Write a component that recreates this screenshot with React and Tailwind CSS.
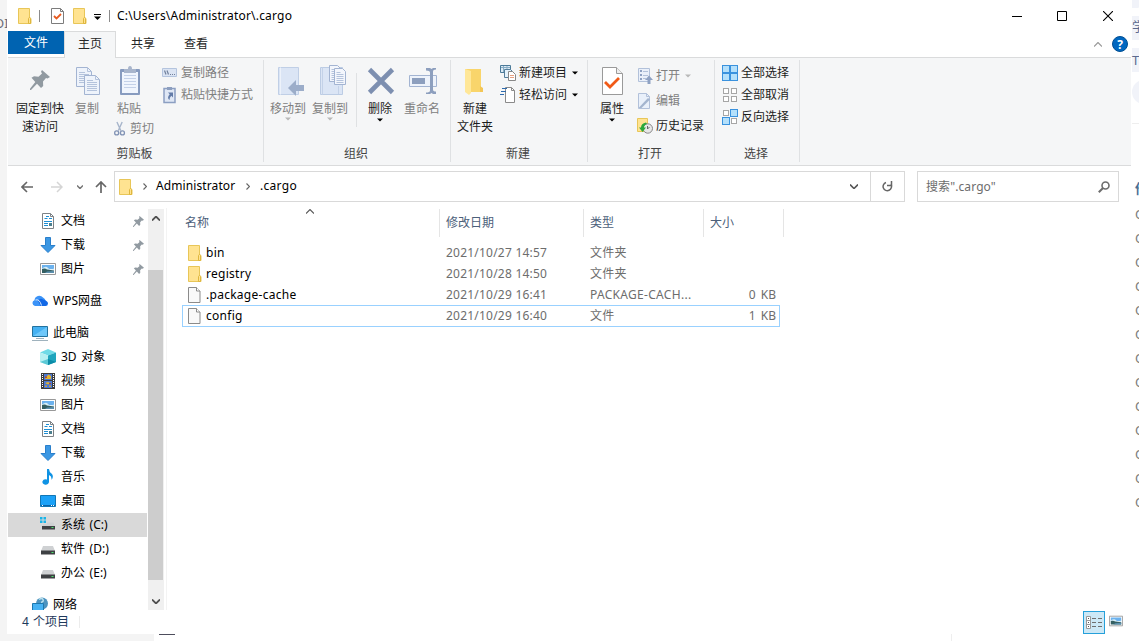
/* ---------- small shared icons ---------- */

const FolderIcon = ({ className = "w-[14px] h-4" }) => (
  <svg className={className} viewBox="0 0 14 16">
    <path d="M.5.5h11v9l1.500 1v5H.5z" fill="#ffe391" stroke="#e8c658" />
    <path d="M10.500 15.500v-5l1-1.200 1 1.200v5z" fill="#ffe391" stroke="#dfb73e" />
  </svg>
)

const FileIcon = () => (
  <svg className="w-[13px] h-4" viewBox="0 0 13 16">
    <path d="M.5.500h8l3.500 3.500v11.500H.5z" fill="#f9f9f9" stroke="#8b8b8b" />
    <path d="M8.500.500v3.500h3.500" fill="#fff" stroke="#8b8b8b" />
  </svg>
)

const PinShape = ({ className }) => (
  <svg className={className} viewBox="0 0 20 20">
    <path d="M12 0l8 7-2.500 1.500-1.500-.5-3 3.500.2 4.500-2.200 2-4-4.200L1 20H0v-1.200L5.300 12 1.500 7.800 4 6.200l4.500.5L12 3.500l-1-1.800z" fill="#919aa1" />
  </svg>
)

const DocIcon = () => (
  <svg className="w-4 h-4" viewBox="0 0 16 16">
    <path d="M2.500.5h8l3 3v12h-11z" fill="#fff" stroke="#7d8286" />
    <path d="M10.500.5v3h3" fill="none" stroke="#7d8286" />
    <path d="M6 3.500h3M4.500 5.500h3M9 5.500h3M4 8.500h8M4 10.500h4M4 12.500h4" stroke="#1e8fd4" />
    <path d="M9 10h3v3H9z" fill="#4c7f8e" />
  </svg>
)

const DownIcon = () => (
  <svg className="w-4 h-4" viewBox="0 0 16 16">
    <path d="M5.500.5h5v8h4.500L8 15.500 1 8.500h4.500z" fill="#3b97e3" stroke="#2a7fcb" />
  </svg>
)

const PictureIcon = ({ className = "w-4 h-4" }) => (
  <svg className={className} viewBox="0 0 16 16">
    <path d="M.5 2.500h15v11H.5z" fill="#fff" stroke="#989898" />
    <path d="M2 4h12v4H2z" fill="#6cb2ee" />
    <path d="M2 7.500q4-3 6-.5t6 .5v2H2z" fill="#d5edf7" />
    <path d="M2 8q3-1 5 .5l7 1V12H2z" fill="#345f62" />
    <path d="M7 10.500l7-.5v2H5z" fill="#5b8fae" />
  </svg>
)

const CloudIcon = () => (
  <svg className="w-4 h-4" viewBox="0 0 16 16">
    <path d="M3 13a3 3 0 0 1-.5-5.800A4.800 4.800 0 0 1 11 4.500 6 6 0 0 1 13 13z" fill="#3b93f7" />
    <path d="M8.500 13L6 7.500a3.500 3.500 0 0 1 5-1q5 1.500 5 4a2.700 2.700 0 0 1-3 2.500z" fill="#1268e6" />
    <path d="M3.500 7q4-1.500 6 5.500" fill="none" stroke="#d6e9ff" strokeWidth="1" />
  </svg>
)

const MonitorIcon = () => (
  <svg className="w-4 h-4" viewBox="0 0 16 16">
    <path d="M.5 1.500h15v10H.5z" fill="#45b1f2" stroke="#23729e" />
    <path d="M1 11l14-9v9z" fill="#6fc8fa" />
    <path d="M4 13.500h8M0 15.500h16" stroke="#9fb2bd" />
  </svg>
)

const CubeIcon = () => (
  <svg className="w-4 h-4" viewBox="0 0 16 16">
    <path d="M0 3.500L8 0l8 3.500-8 3z" fill="#6fdbe7" />
    <path d="M0 3.500l8 3V16l-8-3z" fill="#b5f0f2" />
    <path d="M16 3.500l-8 3V16l8-3z" fill="#1fa5bd" />
    <path d="M8 10l8 3-8 3z" fill="#0c8ca8" />
    <path d="M8 10l-8 3 8 3z" fill="#5cc9d6" />
  </svg>
)

const FilmIcon = () => (
  <svg className="w-4 h-4" viewBox="0 0 16 16">
    <path d="M1 0h14v16H1z" fill="#3d3d3d" />
    <path d="M2.500 1v14M13.500 1v14" stroke="#fff" strokeWidth="1" strokeDasharray="1 1" />
    <path d="M4 1h8v6H4zM4 8h8v7H4z" fill="#4a78d4" />
    <path d="M7 3l1.500-1.500L11 3v3H5zM5 10l3-1 3 1.500-3 1z" fill="#e5b52c" />
    <path d="M5 3.500h2V5H5zM9 10h2v1H9z" fill="#b84a28" />
    <path d="M5 12.500h2V14H5zM9 12.500h2V14H9z" fill="#c9a23a" />
  </svg>
)

const MusicIcon = () => (
  <svg className="w-4 h-4" viewBox="0 0 16 16">
    <path d="M7 0h2q0 3 3 5 2 2.500-.5 6 .5-4-2.500-5v7a3.300 2.700 0 1 1-2-2.500z" fill="#1093e4" />
  </svg>
)

const DesktopIcon = () => (
  <svg className="w-4 h-4" viewBox="0 0 16 16">
    <path d="M.5 2.500h15v11H.5z" fill="#1ba1f7" stroke="#1176b5" />
    <path d="M1 12.500h14" stroke="#0a62a8" />
    <path d="M11 12.500h1M13 12.500h1M2 12.500h1" stroke="#fff" />
  </svg>
)

const DriveIcon = ({ system }) => (
  <svg className="w-4 h-4" viewBox="0 0 16 16">
    {system && <path d="M0 0h2.500v2.500H0zM3.500 0H6v2.500H3.500zM0 3.500h2.500V6H0zM3.500 3.500H6V6H3.500z" fill="#19b4e8" />}
    <path d={system ? "M7 5.500h6.500l1.500 4H2l1.500-2.500H7z" : "M3 5h10l2 5H1z"} fill="#cfd1d3" />
    <path d={system ? "M2 9h13v3.500H2z" : "M1 9.500h14v4H1z"} fill="#3e4043" />
    <path d={system ? "M11.500 10.500h2" : "M11.500 11.500h2"} stroke="#4be36c" />
  </svg>
)

const NetworkIcon = () => (
  <svg className="w-4 h-4" viewBox="0 0 16 16">
    <circle cx="10" cy="6.500" r="6" fill="#4c93bf" />
    <path d="M7 2.500q3-2 4 0t-2 3" fill="none" stroke="#b9dfed" strokeWidth="1.500" />
    <path d="M.5 6.500h11v7H.5z" fill="#47b2f3" stroke="#1e78ae" />
    <path d="M0 15.500h12" stroke="#86a8bc" />
  </svg>
)

const Caret = ({ className }) => (
  <svg className={className} viewBox="0 0 6 4">
    <path d="M0 0.500h6L3 3.500z" fill="currentColor" />
  </svg>
)

/* ---------- ribbon icons ---------- */

const CopyBig = () => (
  <svg className="w-8 h-8" viewBox="0 0 32 32">
    {[[5.500, 1.500], [13.500, 9.500]].map(([x, y]) => (
      <g key={x} transform={`translate(${x} ${y})`}>
        <path d="M0 0h11l4 4v15H0z" fill="#eef3fb" stroke="#a3b4d2" />
        <path d="M11 0v4h4M2.500 5h6M2.500 7h10M2.500 9h10M2.500 11h10M2.500 13h10M2.500 15h10" fill="none" stroke="#b4c3dc" />
      </g>
    ))}
  </svg>
)

const PasteBig = () => (
  <svg className="w-8 h-8" viewBox="-1 0 32 32">
    <rect x="6" y="3" width="20" height="26" rx="1" fill="#879bbf" />
    <path d="M8 6h16v21H8z" fill="#f0f5fd" />
    <path d="M10 9.500h12M10 12.500h12M10 15.500h12M10 18.500h12M10 21.500h12" stroke="#c4d1e8" />
    <path d="M10 3h4q0-3 2-3t2 3h4v4H10z" fill="#a8b5cc" />
  </svg>
)

const MoveBig = () => (
  <svg className="w-8 h-8" viewBox="0 0 32 32">
    <path d="M6.500 1.500h20v27h-20z" fill="#dbe5f5" stroke="#c0cfe6" />
    <path d="M8.500 1.500v27" stroke="#edf2fa" />
    <path d="M16 22l8-8v5h8v6h-8v5z" fill="#9cadc9" />
  </svg>
)

const CopyToBig = () => (
  <svg className="w-8 h-8 overflow-visible" viewBox="0 0 32 32">
    <path d="M6.500 1.500h22v27h-22z" fill="#dbe5f5" stroke="#bccce4" />
    <path d="M8.500 1.500v27M24.500 20v8" stroke="#c4d2e8" />
    {[[15.500, -.5], [20.500, 2.500]].map(([x, y]) => (
      <g key={x} transform={`translate(${x} ${y})`}>
        <path d="M0 0h8l3 3v13H0z" fill="#f3f6fc" stroke="#a3b4d2" />
        <path d="M2 4h4M2 6h7M2 8h7M2 10h7M2 12h7M2 14h7" stroke="#b4c3dc" />
      </g>
    ))}
  </svg>
)

const DeleteBig = () => (
  <svg className="w-8 h-8" viewBox="0 0 32 32">
    <path d="M5.500 3.500l23 23M28.500 3.500l-23 23" stroke="#7d8fb0" strokeWidth="4.600" />
  </svg>
)

const RenameBig = () => (
  <svg className="w-8 h-8" viewBox="0 0 32 32">
    <path d="M3.500 9.500h27v11h-27z" fill="#eef3fb" stroke="#a3b4d2" />
    <path d="M6 12h13v6H6z" fill="#8d9fbe" />
    <path d="M20 2h4l1.500 1 1.500-1h3v1.500q-3 0-3 2v18q0 2 3 2V28h-3l-1.500-1-1.500 1h-4v-1.500q4 0 4-2v-18q0-2-4-2z" fill="#8d9fbe" />
  </svg>
)

const NewFolderBig = () => (
  <svg className="w-8 h-8" viewBox="0 0 32 32">
    <path d="M6 3h16v20l2 1v2H6z" fill="#f9d56b" />
    <path d="M6 3l6 2v22l-2 2-4-3z" fill="#ffe798" />
    <path d="M21 20l3 2v4h-3z" fill="#f3c656" />
  </svg>
)

const PropsBig = () => (
  <svg className="w-8 h-8" viewBox="0 0 32 32">
    <path d="M6.500 1.500h14l6 6v21h-20z" fill="#fff" stroke="#9a9a9a" />
    <path d="M20.500 1.500v6h6" fill="#eee" stroke="#9a9a9a" />
    <path d="M9 16l5 5 9-9" fill="none" stroke="#f15a17" strokeWidth="2.800" />
  </svg>
)

const PathIcon = () => (
  <svg className="w-4 h-4" viewBox="0 0 16 16">
    <path d="M.5 3.500h14v8H.5z" fill="#dbe4f3" stroke="#b4c4de" />
    <path d="M2.500 5.500l1.500 4M5 5.500l1.500 4M8 9.500h1M10 9.500h1M12 9.500h1" fill="none" stroke="#71809c" strokeWidth="1.200" />
  </svg>
)

const ShortcutIcon = () => (
  <svg className="w-4 h-4 overflow-visible" viewBox="0 0 16 16">
    <path d="M2 1.500h11v14H2z" fill="#dfe7f5" stroke="#8c9fc2" strokeWidth="1.500" />
    <path d="M5 0h5v3H5z" fill="#8c9ebf" />
    <path d="M6 5.500h5v5L9.300 8.800q-2 1.700-1.800 4.200Q4.500 11 7.700 7.200z" fill="#627ba8" />
  </svg>
)

const CutIcon = () => (
  <svg className="w-4 h-4" viewBox="0 0 16 16">
    <path d="M4.500 0l4.500 10M10.500 0L6 10" fill="none" stroke="#a7b5cb" strokeWidth="1.600" />
    <circle cx="4.200" cy="12.500" r="2.300" fill="none" stroke="#8193b5" strokeWidth="1.500" />
    <circle cx="10.800" cy="12.500" r="2.300" fill="none" stroke="#8193b5" strokeWidth="1.500" />
  </svg>
)

const NewItemIcon = () => (
  <svg className="w-4 h-4" viewBox="0 0 16 16">
    <path d="M.5.5h10v7H.5z" fill="#dceaf5" stroke="#4b7a99" />
    <path d="M1 2.500h9M3.500 1v6M7 1v6" stroke="#88adc5" />
    <path d="M4.500 4.500h6l2 2v6h-8z" fill="#e4f2fc" stroke="#557e9b" />
    <path d="M8.500 6.500h4l3 3v6h-7z" fill="#fff" stroke="#888" />
    <path d="M10 10.500h4M10 12.500h4" stroke="#e8a183" />
  </svg>
)

const EasyIcon = () => (
  <svg className="w-4 h-4" viewBox="0 0 16 16">
    <path d="M5.500.5h6l3 3v12h-9z" fill="#fff" stroke="#8a8a8a" />
    <path d="M11.500.5v3h3" fill="none" stroke="#8a8a8a" />
    <path d="M2 1.500h5M1 4.500h5M0 7.500h4" stroke="#2e6bad" strokeWidth="1.200" />
  </svg>
)

const OpenIcon = () => (
  <svg className="w-4 h-4" viewBox="0 0 16 16">
    <path d="M1.500.5h11v13h-11z" fill="#eaf0fa" stroke="#b2c1da" />
    <path d="M3 2h2v2H3zM3 6h2v2H3zM3 10h2v2H3z" fill="#8fa2c3" />
    <path d="M6 3.500h5M6 7.500h5M6 10.500h3" stroke="#b2c1da" />
    <path d="M8 12l4-4.500 4 4.500h-2.500v4h-3v-4z" fill="#8fa2c3" />
  </svg>
)

const EditIcon = () => (
  <svg className="w-4 h-4" viewBox="0 0 16 16">
    <path d="M1.500.500h8l3 3v12h-11z" fill="#e9f0fa" stroke="#b2c1da" />
    <path d="M9.500.500v3h3" fill="none" stroke="#b2c1da" />
    <path d="M2 14.500L11 5l2 1.500-8.500 8.500H2z" fill="#a4b5cf" />
  </svg>
)

const HistoryIcon = () => (
  <svg className="w-4 h-4" viewBox="0 0 16 16">
    <path d="M.5.500h10v13H.5z" fill="#ffe391" stroke="#e8c658" />
    <circle cx="10.800" cy="10.500" r="4.700" fill="#e7e7e7" stroke="#888" />
    <path d="M10.500 8v3l2-2" fill="none" stroke="#666" />
    <path d="M9 4.500q-5 1-5 5H2L5.500 14 9 9.500H7q0-2.500 3-3.500z" fill="#2ca93b" />
  </svg>
)

// state of each tile, in reading order
const TilesIcon = ({ on }) => (
  <svg className="w-4 h-4" viewBox="0 0 16 16">
    {[[0.500, 0.500], [8.500, 0.500], [0.500, 8.500], [8.500, 8.500]].map(([x, y], i) =>
      on[i] ? (
        <rect key={i} x={x} y={y} width="7" height="7" fill="#b4e0fb" stroke="#3a92de" />
      ) : (
        <rect key={i} x={x + 1} y={y + 1} width="5" height="5" fill="#fff" stroke="#a6a6a6" />
      )
    )}
  </svg>
)

/* ---------- ribbon building blocks ---------- */

function Group({ label, width, children }) {
  return (
    <div className={`${width} h-[107px] flex flex-col relative shrink-0`}>
      <div className="flex h-[86px]">{children}</div>
      <div className="text-center leading-[18px] text-[#444] pt-px pr-[3px]">{label}</div>
      <div className="absolute right-0 top-[2px] h-[102px] w-px bg-[#dfe1e3]" />
    </div>
  )
}

function BigButton({ icon, lines, width, muted, arrow }) {
  return (
    <div className={`${width} flex flex-col items-center shrink-0 ${muted ? "text-[#808080]" : "text-[#1c1c1c]"}`}>
      <div className="h-[42px] pt-2">{icon}</div>
      {lines.map((line) => (
        <div key={line} className="leading-[18px] whitespace-nowrap">{line}</div>
      ))}
      {arrow && <Caret className={muted ? "w-[6px] h-1 text-[#b8b8b8] -mt-px" : "w-[6px] h-1 text-black"} />}
    </div>
  )
}

function SmallButton({ icon, text, muted, arrow, height = "h-[22px]" }) {
  return (
    <div className={`${height} flex items-center whitespace-nowrap ${muted ? "text-[#808080]" : "text-[#1c1c1c]"}`}>
      {icon}
      <span className="ml-[3px] leading-[18px]">{text}</span>
      {arrow && <Caret className={`w-[6px] h-1 ml-[5px] ${muted ? "text-[#b8b8b8]" : "text-black"}`} />}
    </div>
  )
}

function Ribbon() {
  return (
    <div className="ml-px h-[108px] bg-[#f5f6f7] border-b border-[#dadbdc] flex">
      <Group label="剪贴板" width="w-[256px]">
        <BigButton width="w-16" lines={["固定到快", "速访问"]} icon={<PinShape className="w-5 h-5 mt-1" />} />
        <BigButton width="w-[30px]" lines={["复制"]} icon={<CopyBig />} muted />
        <div className="w-[52px]">
          <BigButton width="w-[54px]" lines={["粘贴"]} icon={<PasteBig />} muted />
          <div className="pl-[11px]">
            <SmallButton icon={<CutIcon />} text="剪切" muted />
          </div>
        </div>
        <div className="pt-1 pl-2">
          <SmallButton icon={<PathIcon />} text="复制路径" muted />
          <SmallButton icon={<ShortcutIcon />} text="粘贴快捷方式" muted />
        </div>
      </Group>

      <Group label="组织" width="w-[187px]">
        <BigButton width="w-12" lines={["移动到"]} icon={<MoveBig />} muted arrow />
        <BigButton width="w-9" lines={["复制到"]} icon={<CopyToBig />} muted arrow />
        <div className="w-px h-[54px] mt-[15px] ml-2 bg-[#dfe1e3]" />
        <BigButton width="w-[46px]" lines={["删除"]} icon={<DeleteBig />} arrow />
        <BigButton width="w-[38px]" lines={["重命名"]} icon={<RenameBig />} muted />
      </Group>

      <Group label="新建" width="w-[137px]">
        <BigButton width="w-12" lines={["新建", "文件夹"]} icon={<NewFolderBig />} />
        <div className="pt-1 pl-px">
          <SmallButton icon={<NewItemIcon />} text="新建项目" arrow />
          <SmallButton icon={<EasyIcon />} text="轻松访问" arrow />
        </div>
      </Group>

      <Group label="打开" width="w-[127px]">
        <BigButton width="w-12" lines={["属性"]} icon={<PropsBig />} arrow />
        <div className="pt-[5px] pl-[1px]">
          <SmallButton height="h-[25px]" icon={<OpenIcon />} text="打开" muted arrow />
          <SmallButton height="h-[25px]" icon={<EditIcon />} text="编辑" muted />
          <SmallButton height="h-[25px]" icon={<HistoryIcon />} text="历史记录" />
        </div>
      </Group>

      <Group label="选择" width="w-[85px]">
        <div className="pt-1 pl-[7px]">
          <SmallButton icon={<TilesIcon on={[1, 1, 1, 1]} />} text="全部选择" />
          <SmallButton icon={<TilesIcon on={[0, 0, 0, 0]} />} text="全部取消" />
          <SmallButton icon={<TilesIcon on={[0, 1, 1, 0]} />} text="反向选择" />
        </div>
      </Group>
    </div>
  )
}

/* ---------- title, tabs, address ---------- */

function TitleBar() {
  return (
    <div className="h-[31px] flex items-center pl-[11px] shrink-0">
      <FolderIcon className="w-[14px] h-4" />
      <div className="w-px h-3 bg-[#8b8b8b] ml-[7px]" />
      <svg className="w-[13px] h-4 ml-[11px]" viewBox="0 0 13 16">
        <path d="M.5.5h9l3 3v12H.5z" fill="#fff" stroke="#7c7c7c" />
        <path d="M9.500.5v3h3" fill="none" stroke="#7c7c7c" />
        <path d="M3 8l2.500 2.500L10 6" fill="none" stroke="#e85b20" strokeWidth="1.800" />
      </svg>
      <FolderIcon className="w-[14px] h-4 ml-[9px]" />
      <svg className="w-[7px] h-[6px] ml-[7px] mt-[2px]" viewBox="0 0 7 6">
        <path d="M0 .5h7" stroke="#000" />
        <path d="M0 2.500h7L3.500 6z" />
      </svg>
      <div className="w-px h-3 bg-[#8b8b8b] ml-2" />
      <span className="ml-[7px] text-black leading-[18px] tracking-[0.2px]">C:\Users\Administrator\.cargo</span>
      <div className="flex-1" />
      <svg className="w-[10px] h-[10px]" viewBox="0 0 10 10">
        <path d="M0 5.500h10" stroke="#000" />
      </svg>
      <svg className="w-[10px] h-[10px] ml-[35px]" viewBox="0 0 10 10">
        <path d="M.5.5h9v9h-9z" fill="none" stroke="#000" />
      </svg>
      <svg className="w-[10px] h-[10px] ml-9 mr-[18px]" viewBox="0 0 10 10">
        <path d="M0 0l10 10M10 0L0 10" stroke="#000" strokeWidth="1.100" />
      </svg>
    </div>
  )
}

function Tabs() {
  return (
    <div className="h-[27px] flex ml-px text-[#262626] leading-[25px] text-center shrink-0">
      <div className="w-14 h-[27px] border-b border-[#dadbdc]">
        <div className="h-[23px] bg-[#0063b1] text-white leading-[24px]">文件</div>
      </div>
      <div className="w-[52px] h-[27px] bg-[#f5f6f7] border border-b-0 border-[#dadbdc] leading-[23px]">主页</div>
      <div className="flex flex-1 border-b border-[#dadbdc]">
        <div className="w-[54px]">共享</div>
        <div className="w-[52px]">查看</div>
        <div className="flex-1" />
        <svg className="w-2 h-[5px] mt-[11px]" viewBox="0 0 8 5">
          <path d="M0 4.500l4-4 4 4" fill="none" stroke="#999" strokeWidth="1.200" />
        </svg>
        <div className="w-4 h-4 rounded-full bg-[#0067c0] border border-[#004e92] text-white font-bold leading-[15px] ml-[10px] mr-[3px] mt-[5px]">?</div>
      </div>
    </div>
  )
}

const Crumb = () => (
  <svg className="w-1 h-[7px]" viewBox="0 0 4 7">
    <path d="M.5.500l3 3-3 3" fill="none" stroke="#666" strokeWidth="1.200" />
  </svg>
)

function AddressBar() {
  return (
    <div className="h-[42px] flex items-start pt-[5px] shrink-0">
      <div className="flex items-center h-[31px] w-[107px] pl-[14px]">
        <svg className="w-3 h-3" viewBox="0 0 12 12">
          <path d="M12 6H1M6 1L1 6l5 5" fill="none" stroke="#666" strokeWidth="1.600" />
        </svg>
        <svg className="w-3 h-3 ml-[18px]" viewBox="0 0 12 12">
          <path d="M0 6h11M6 1l5 5-5 5" fill="none" stroke="#d5d5d5" strokeWidth="1.500" />
        </svg>
        <svg className="w-[6px] h-1 ml-[14px]" viewBox="0 0 6 4">
          <path d="M0 .5l3 3 3-3" fill="none" stroke="#777" strokeWidth="1.500" />
        </svg>
        <svg className="w-3 h-3 ml-3" viewBox="0 0 12 12">
          <path d="M6 12V1M1 6l5-5 5 5" fill="none" stroke="#666" strokeWidth="1.700" />
        </svg>
      </div>
      <div className="w-[791px] h-[31px] border border-[#d9d9d9] flex items-center pl-1 text-black">
        <FolderIcon className="w-[14px] h-4" />
        <div className="w-[23px] flex justify-center"><Crumb /></div>
        <span className="w-[81px] leading-[18px] tracking-[0.1px] -mt-px">Administrator</span>
        <div className="w-[22px] flex justify-center"><Crumb /></div>
        <span className="leading-[18px] ml-px tracking-[0.3px] -mt-px">.cargo</span>
        <div className="flex-1" />
        <svg className="w-2 h-[5px] mr-3" viewBox="0 0 8 5">
          <path d="M0 .5l4 4 4-4" fill="none" stroke="#555" strokeWidth="1.600" />
        </svg>
        <div className="w-[34px] h-full border-l border-[#d9d9d9] flex items-center justify-center">
          <svg className="w-[11px] h-[11px]" viewBox="0 0 11 11">
            <path d="M4 1.500A4.200 4.200 0 1 0 9 3.500" fill="none" stroke="#666" strokeWidth="1.500" />
            <path d="M5 4.500h4.500V0" fill="none" stroke="#666" strokeWidth="1.500" />
          </svg>
        </div>
      </div>
      <div className="w-[202px] h-[31px] ml-3 border border-[#d9d9d9] flex items-center justify-between pl-2 pr-2 text-[#6d6d6d]">
        <span className="leading-[18px] tracking-[0.1px]">搜索".cargo"</span>
        <svg className="w-3 h-3" viewBox="0 0 12 12">
          <circle cx="7.500" cy="4.500" r="3.500" fill="none" stroke="#6d6d6d" strokeWidth="1.600" />
          <path d="M5 7L.8 11.200" stroke="#6d6d6d" strokeWidth="2" />
        </svg>
      </div>
    </div>
  )
}

/* ---------- navigation pane ---------- */

const quickAccess = [
  { text: "文档", icon: <DocIcon /> },
  { text: "下载", icon: <DownIcon /> },
  { text: "图片", icon: <PictureIcon /> },
]

const thisPc = [
  { text: "3D 对象", icon: <CubeIcon /> },
  { text: "视频", icon: <FilmIcon /> },
  { text: "图片", icon: <PictureIcon /> },
  { text: "文档", icon: <DocIcon /> },
  { text: "下载", icon: <DownIcon /> },
  { text: "音乐", icon: <MusicIcon /> },
  { text: "桌面", icon: <DesktopIcon /> },
  { text: "系统 (C:)", icon: <DriveIcon system />, selected: true },
  { text: "软件 (D:)", icon: <DriveIcon /> },
  { text: "办公 (E:)", icon: <DriveIcon /> },
]

function NavItem({ icon, text, root, pinned, selected }) {
  return (
    <div className={`h-6 flex items-center shrink-0 ${root ? "pl-6" : "pl-8"} ${selected ? "bg-[#d9d9d9]" : ""}`}>
      {icon}
      <span className="ml-[5px] leading-[18px] flex-1 [word-spacing:1.5px]">{text}</span>
      {pinned && <PinShape className="w-[11px] h-[11px] mr-[3px]" />}
    </div>
  )
}

function NavPane() {
  return (
    <div className="flex h-[402px] ml-px text-black">
      <div className="w-[139px] flex flex-col overflow-hidden pt-px">
        {quickAccess.map((item) => <NavItem key={item.text} {...item} pinned />)}
        <div className="h-2 shrink-0" />
        <NavItem icon={<CloudIcon />} text="WPS网盘" root />
        <div className="h-2 shrink-0" />
        <NavItem icon={<MonitorIcon />} text="此电脑" root />
        {thisPc.map((item) => <NavItem key={item.text} {...item} />)}
        <div className="h-2 shrink-0" />
        <NavItem icon={<NetworkIcon />} text="网络" root />
      </div>
      <div className="w-4 ml-px mt-px bg-[#f0f0f0] flex flex-col items-center">
        <svg className="w-2 h-[5px] mt-[7px]" viewBox="0 0 8 5">
          <path d="M0 4.500l4-4 4 4" fill="none" stroke="#505050" strokeWidth="1.800" />
        </svg>
        <div className="w-full h-[310px] mt-[49px] pr-px"><div className="h-full bg-[#cdcdcd]" /></div>
        <svg className="w-2 h-[5px] mt-[19px]" viewBox="0 0 8 5">
          <path d="M0 .5l4 4 4-4" fill="none" stroke="#505050" strokeWidth="1.800" />
        </svg>
      </div>
      <div className="w-px ml-[2px] bg-[#f3f3f3]" />
    </div>
  )
}

/* ---------- file list ---------- */

const files = [
  { name: "bin", date: "2021/10/27 14:57", type: "文件夹", size: "", folder: true },
  { name: "registry", date: "2021/10/28 14:50", type: "文件夹", size: "", folder: true },
  { name: ".package-cache", date: "2021/10/29 16:41", type: "PACKAGE-CACH...", size: "0 KB" },
  { name: "config", date: "2021/10/29 16:40", type: "文件", size: "1 KB", focused: true },
]

function FileList() {
  return (
    <div className="pl-[15px] pt-px">
      <div className="flex h-7 leading-[28px] text-[#4c607a] relative">
        <div className="w-[258px] pl-[3px] border-r border-[#e5e5e5]">名称</div>
        <div className="w-[144px] pl-[6px] border-r border-[#e5e5e5]">修改日期</div>
        <div className="w-[120px] pl-[6px] border-r border-[#e5e5e5]">类型</div>
        <div className="w-[80px] pl-[6px] border-r border-[#e5e5e5]">大小</div>
        {/* sort direction marker */}
        <svg className="absolute left-[124px] top-0 w-2 h-[5px]" viewBox="0 0 8 5">
          <path d="M0 4.500l4-4 4 4" fill="none" stroke="#555" strokeWidth="1.100" />
        </svg>
      </div>
      <div className="h-[5px]" />
      {files.map((file) => (
        <div
          key={file.name}
          className={`flex items-center w-[598px] border ${file.focused ? "h-[22px] border-[#99d1ff]" : "h-[21px] border-transparent"}`}
        >
          <div className="w-[263px] flex items-center pl-[5px]">
            <div className="w-[18px]">{file.folder ? <FolderIcon /> : <FileIcon />}</div>
            <span className="text-black leading-[18px] tracking-[0.27px]">{file.name}</span>
          </div>
          <span className="w-[144px] leading-[18px] text-[#6d6d6d] tracking-[0.22px]">{file.date}</span>
          <span className="w-[110px] leading-[18px] text-[#6d6d6d] tracking-[0.3px]">{file.type}</span>
          <span className="flex-1 leading-[18px] text-right pr-[3px] text-[#6d6d6d] [word-spacing:2px]">{file.size}</span>
        </div>
      ))}
    </div>
  )
}

function StatusBar() {
  return (
    <div className="h-6 flex items-center pl-[15px] text-[#1e395b] shrink-0">
      <span className="leading-[18px] w-[57px] [word-spacing:1px]">4 个项目</span>
      <div className="w-px h-3 bg-[#ececec]" />
      <div className="flex-1" />
      <div className="w-[22px] h-[23px] bg-[#cce8f6] border border-[#26a0da] flex items-center justify-center mr-1">
        <svg className="w-4 h-[14px]" viewBox="0 0 16 14">
          <path d="M.5 1.500h4v12h-4zM.5 5.500h4M.5 9.500h4" fill="#fff" stroke="#999" />
          <path d="M2 3.500h1M2 7.500h1M2 11.500h1" stroke="#555" />
          <path d="M6 3.500h4M12 3.500h4M6 7.500h4M12 7.500h4M6 11.500h4M12 11.500h4" stroke="#6f6f6f" />
        </svg>
      </div>
      <PictureIcon className="w-[14px] h-[14px] mr-2 mb-[3px]" />
    </div>
  )
}

/* ---------- page edge behind the window ---------- */

function RightEdge() {
  return (
    <div className="w-2 h-[641px] bg-white overflow-hidden shrink-0 pl-px text-[#5b6a8f]">
      <div className="h-2 w-3 bg-[#f1f3f9] rounded-br-full" />
      <div className="h-6 mt-2 bg-[#f1f3f9] leading-[20px] text-[13px] whitespace-nowrap">学</div>
      <div className="h-6 mt-2 bg-[#f1f3f9] leading-[24px] text-[13px]">T</div>
      <div className="h-6 w-6 mt-2 bg-[#f1f3f9] rounded-full" />
      <div className="h-px mt-[19px] bg-[#eee]" />
      <div className="h-[78px] pt-[54px] pl-[3px] font-bold text-[13px] leading-[20px] text-[#4a6f95]">他</div>
      {Array.from({ length: 13 }, (_, i) => (
        <div key={i} className="h-6 pl-[3px] text-[13px] leading-6 text-[#7a7a7a]">O</div>
      ))}
    </div>
  )
}

export default function App() {
  return (
    <div className="w-[1139px] h-[641px] flex overflow-hidden bg-white text-[12px] font-['Noto_Sans','Noto_Sans_CJK_SC',sans-serif]">
      <div className="w-[7px] h-[641px] bg-[#f4f4f4] overflow-hidden shrink-0">
        <div className="mt-[14px] -ml-[6px] text-[13px] leading-[18px] text-[#6b6b78] whitespace-nowrap">OI</div>
      </div>
      <div className="w-[1124px] h-[641px] flex flex-col shrink-0">
        <TitleBar />
        <Tabs />
        <Ribbon />
        <AddressBar />
        <div className="flex h-[402px]">
          <NavPane />
          <FileList />
        </div>
        <StatusBar />
        <div className="h-[7px] flex">
          <div className="w-[147px] bg-[#f4f4f4]" />
          <div className="w-4 h-px ml-[5px] bg-[#4d4d5c]" />
          <div className="w-px h-[7px] ml-[776px] bg-[#eee]" />
        </div>
      </div>
      <RightEdge />
    </div>
  )
}
